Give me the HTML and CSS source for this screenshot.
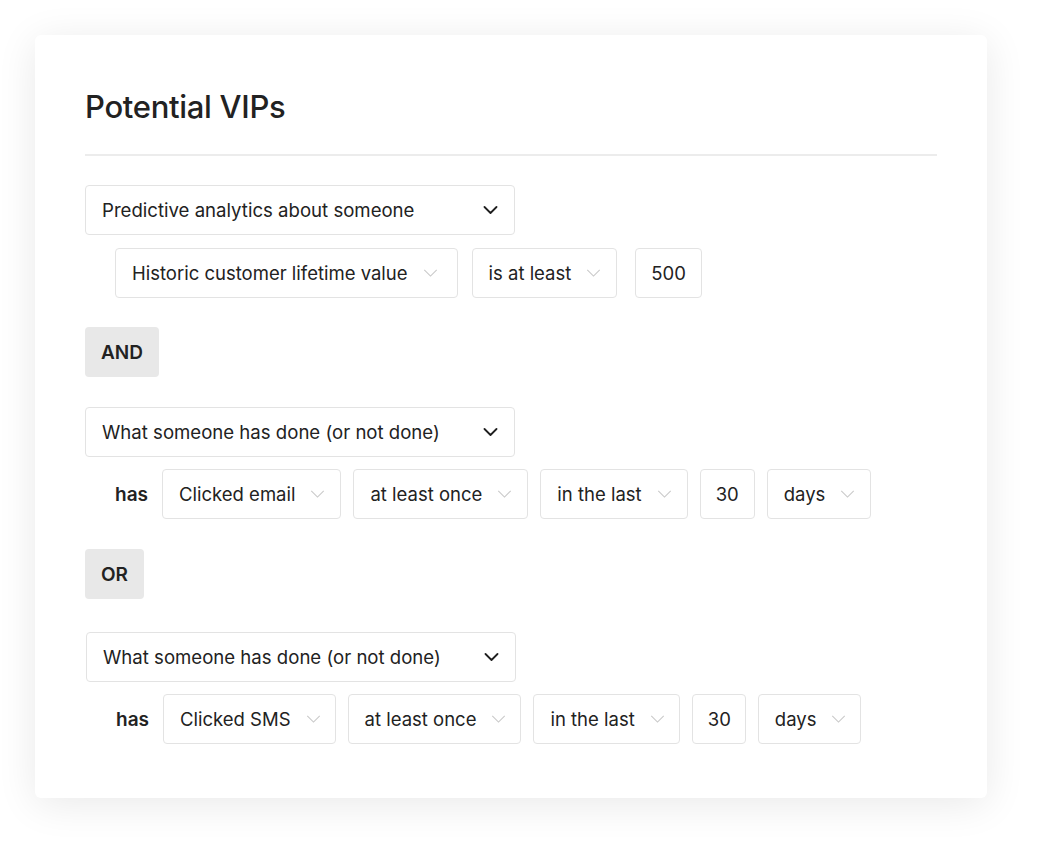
FILE: index.html
```html
<!DOCTYPE html>
<html>
<head>
<meta charset="utf-8">
<link rel="stylesheet" href="styles.css">
</head>
<body>
<div class="card">
  <h1 class="title">Potential VIPs</h1>
  <div class="divider"></div>

  <div class="group group-first">
    <div class="main-select">
      <span>Predictive analytics about someone</span>
      <svg class="chev-dark" viewBox="0 0 14 8"><path d="M1 1l6 6 6-6" fill="none" stroke="#1f1f1f" stroke-width="1.8" stroke-linecap="round" stroke-linejoin="round"/></svg>
    </div>
    <div class="sub-row sub-row-first">
      <div class="box box-wide"><span>Historic customer lifetime value</span><svg class="chev" viewBox="0 0 16 9"><path d="M1 1l7 7 7-7" fill="none" stroke="#c9c9c9" stroke-width="1.2"/></svg></div>
      <div class="box"><span>is at least</span><svg class="chev" viewBox="0 0 16 9"><path d="M1 1l7 7 7-7" fill="none" stroke="#c9c9c9" stroke-width="1.2"/></svg></div>
      <div class="box num num-gap">500</div>
    </div>
  </div>

  <div class="op">AND</div>

  <div class="group">
    <div class="main-select">
      <span>What someone has done (or not done)</span>
      <svg class="chev-dark" viewBox="0 0 14 8"><path d="M1 1l6 6 6-6" fill="none" stroke="#1f1f1f" stroke-width="1.8" stroke-linecap="round" stroke-linejoin="round"/></svg>
    </div>
    <div class="sub-row">
      <span class="has">has</span>
      <div class="box"><span>Clicked email</span><svg class="chev" viewBox="0 0 16 9"><path d="M1 1l7 7 7-7" fill="none" stroke="#c9c9c9" stroke-width="1.2"/></svg></div>
      <div class="box"><span>at least once</span><svg class="chev" viewBox="0 0 16 9"><path d="M1 1l7 7 7-7" fill="none" stroke="#c9c9c9" stroke-width="1.2"/></svg></div>
      <div class="box"><span>in the last</span><svg class="chev" viewBox="0 0 16 9"><path d="M1 1l7 7 7-7" fill="none" stroke="#c9c9c9" stroke-width="1.2"/></svg></div>
      <div class="box num">30</div>
      <div class="box"><span>days</span><svg class="chev" viewBox="0 0 16 9"><path d="M1 1l7 7 7-7" fill="none" stroke="#c9c9c9" stroke-width="1.2"/></svg></div>
    </div>
  </div>

  <div class="op op-or">OR</div>

  <div class="group group-last">
    <div class="main-select">
      <span>What someone has done (or not done)</span>
      <svg class="chev-dark" viewBox="0 0 14 8"><path d="M1 1l6 6 6-6" fill="none" stroke="#1f1f1f" stroke-width="1.8" stroke-linecap="round" stroke-linejoin="round"/></svg>
    </div>
    <div class="sub-row sub-row-tight">
      <span class="has">has</span>
      <div class="box"><span>Clicked SMS</span><svg class="chev" viewBox="0 0 16 9"><path d="M1 1l7 7 7-7" fill="none" stroke="#c9c9c9" stroke-width="1.2"/></svg></div>
      <div class="box"><span>at least once</span><svg class="chev" viewBox="0 0 16 9"><path d="M1 1l7 7 7-7" fill="none" stroke="#c9c9c9" stroke-width="1.2"/></svg></div>
      <div class="box"><span>in the last</span><svg class="chev" viewBox="0 0 16 9"><path d="M1 1l7 7 7-7" fill="none" stroke="#c9c9c9" stroke-width="1.2"/></svg></div>
      <div class="box num">30</div>
      <div class="box"><span>days</span><svg class="chev" viewBox="0 0 16 9"><path d="M1 1l7 7 7-7" fill="none" stroke="#c9c9c9" stroke-width="1.2"/></svg></div>
    </div>
  </div>
</div>
</body>
</html>
```

FILE: styles.css
```css
* { box-sizing: border-box; }
html, body { margin: 0; padding: 0; background: #ffffff; }
body {
  font-family: Inter, "Noto Sans", "Liberation Sans", sans-serif;
  color: #222222;
  padding: 35px 55px 55px 35px;
}
.card {
  width: 952px;
  height: 763px;
  background: #ffffff;
  border-radius: 6px;
  box-shadow: 0 6px 40px rgba(0, 0, 0, 0.09);
  padding: 48px 50px 0 50px;
}
.title {
  margin: 0;
  font-size: 31px;
  line-height: 48px;
  font-weight: 500;
  letter-spacing: -0.3px;
  color: #222222;
}
.divider {
  height: 2px;
  background: #ececec;
  margin-top: 23px;
  margin-bottom: 29px;
}
.group { display: flex; flex-direction: column; gap: 12px; }
.group-first { gap: 13px; }
.group-last { margin-left: 1px; }
.main-select {
  width: 430px;
  height: 50px;
  border: 1px solid #e3e3e3;
  border-radius: 4px;
  display: flex;
  align-items: center;
  justify-content: space-between;
  padding: 0 16px 0 16px;
  font-size: 18.6px;
  color: #222222;
}
.chev-dark { width: 15px; height: 8px; }
.sub-row {
  display: flex;
  align-items: center;
  gap: 12px;
  margin-left: 30px;
}
.sub-row-first { gap: 14px; }
.num-gap { margin-left: 4px; padding: 0 16px; }
.box {
  height: 50px;
  border: 1px solid #e3e3e3;
  border-radius: 4px;
  display: flex;
  align-items: center;
  gap: 15px;
  padding: 0 15px 0 16px;
  font-size: 18.5px;
  color: #222222;
}
.box-wide { padding-right: 19px; }
.sub-row-tight .box { padding-right: 14px; }
.num { padding: 0 15px; }
.chev { width: 15px; height: 8px; }
.has {
  font-size: 19px;
  font-weight: 600;
  width: 35px;
}
.op {
  display: inline-flex;
  align-self: flex-start;
  align-items: center;
  justify-content: center;
  height: 50px;
  padding: 0 16px;
  background: #e8e8e8;
  border-radius: 4px;
  font-size: 19px;
  font-weight: 600;
  margin: 29px 0 30px 0;
}
.op-or { margin: 30px 0 33px 0; }
```
